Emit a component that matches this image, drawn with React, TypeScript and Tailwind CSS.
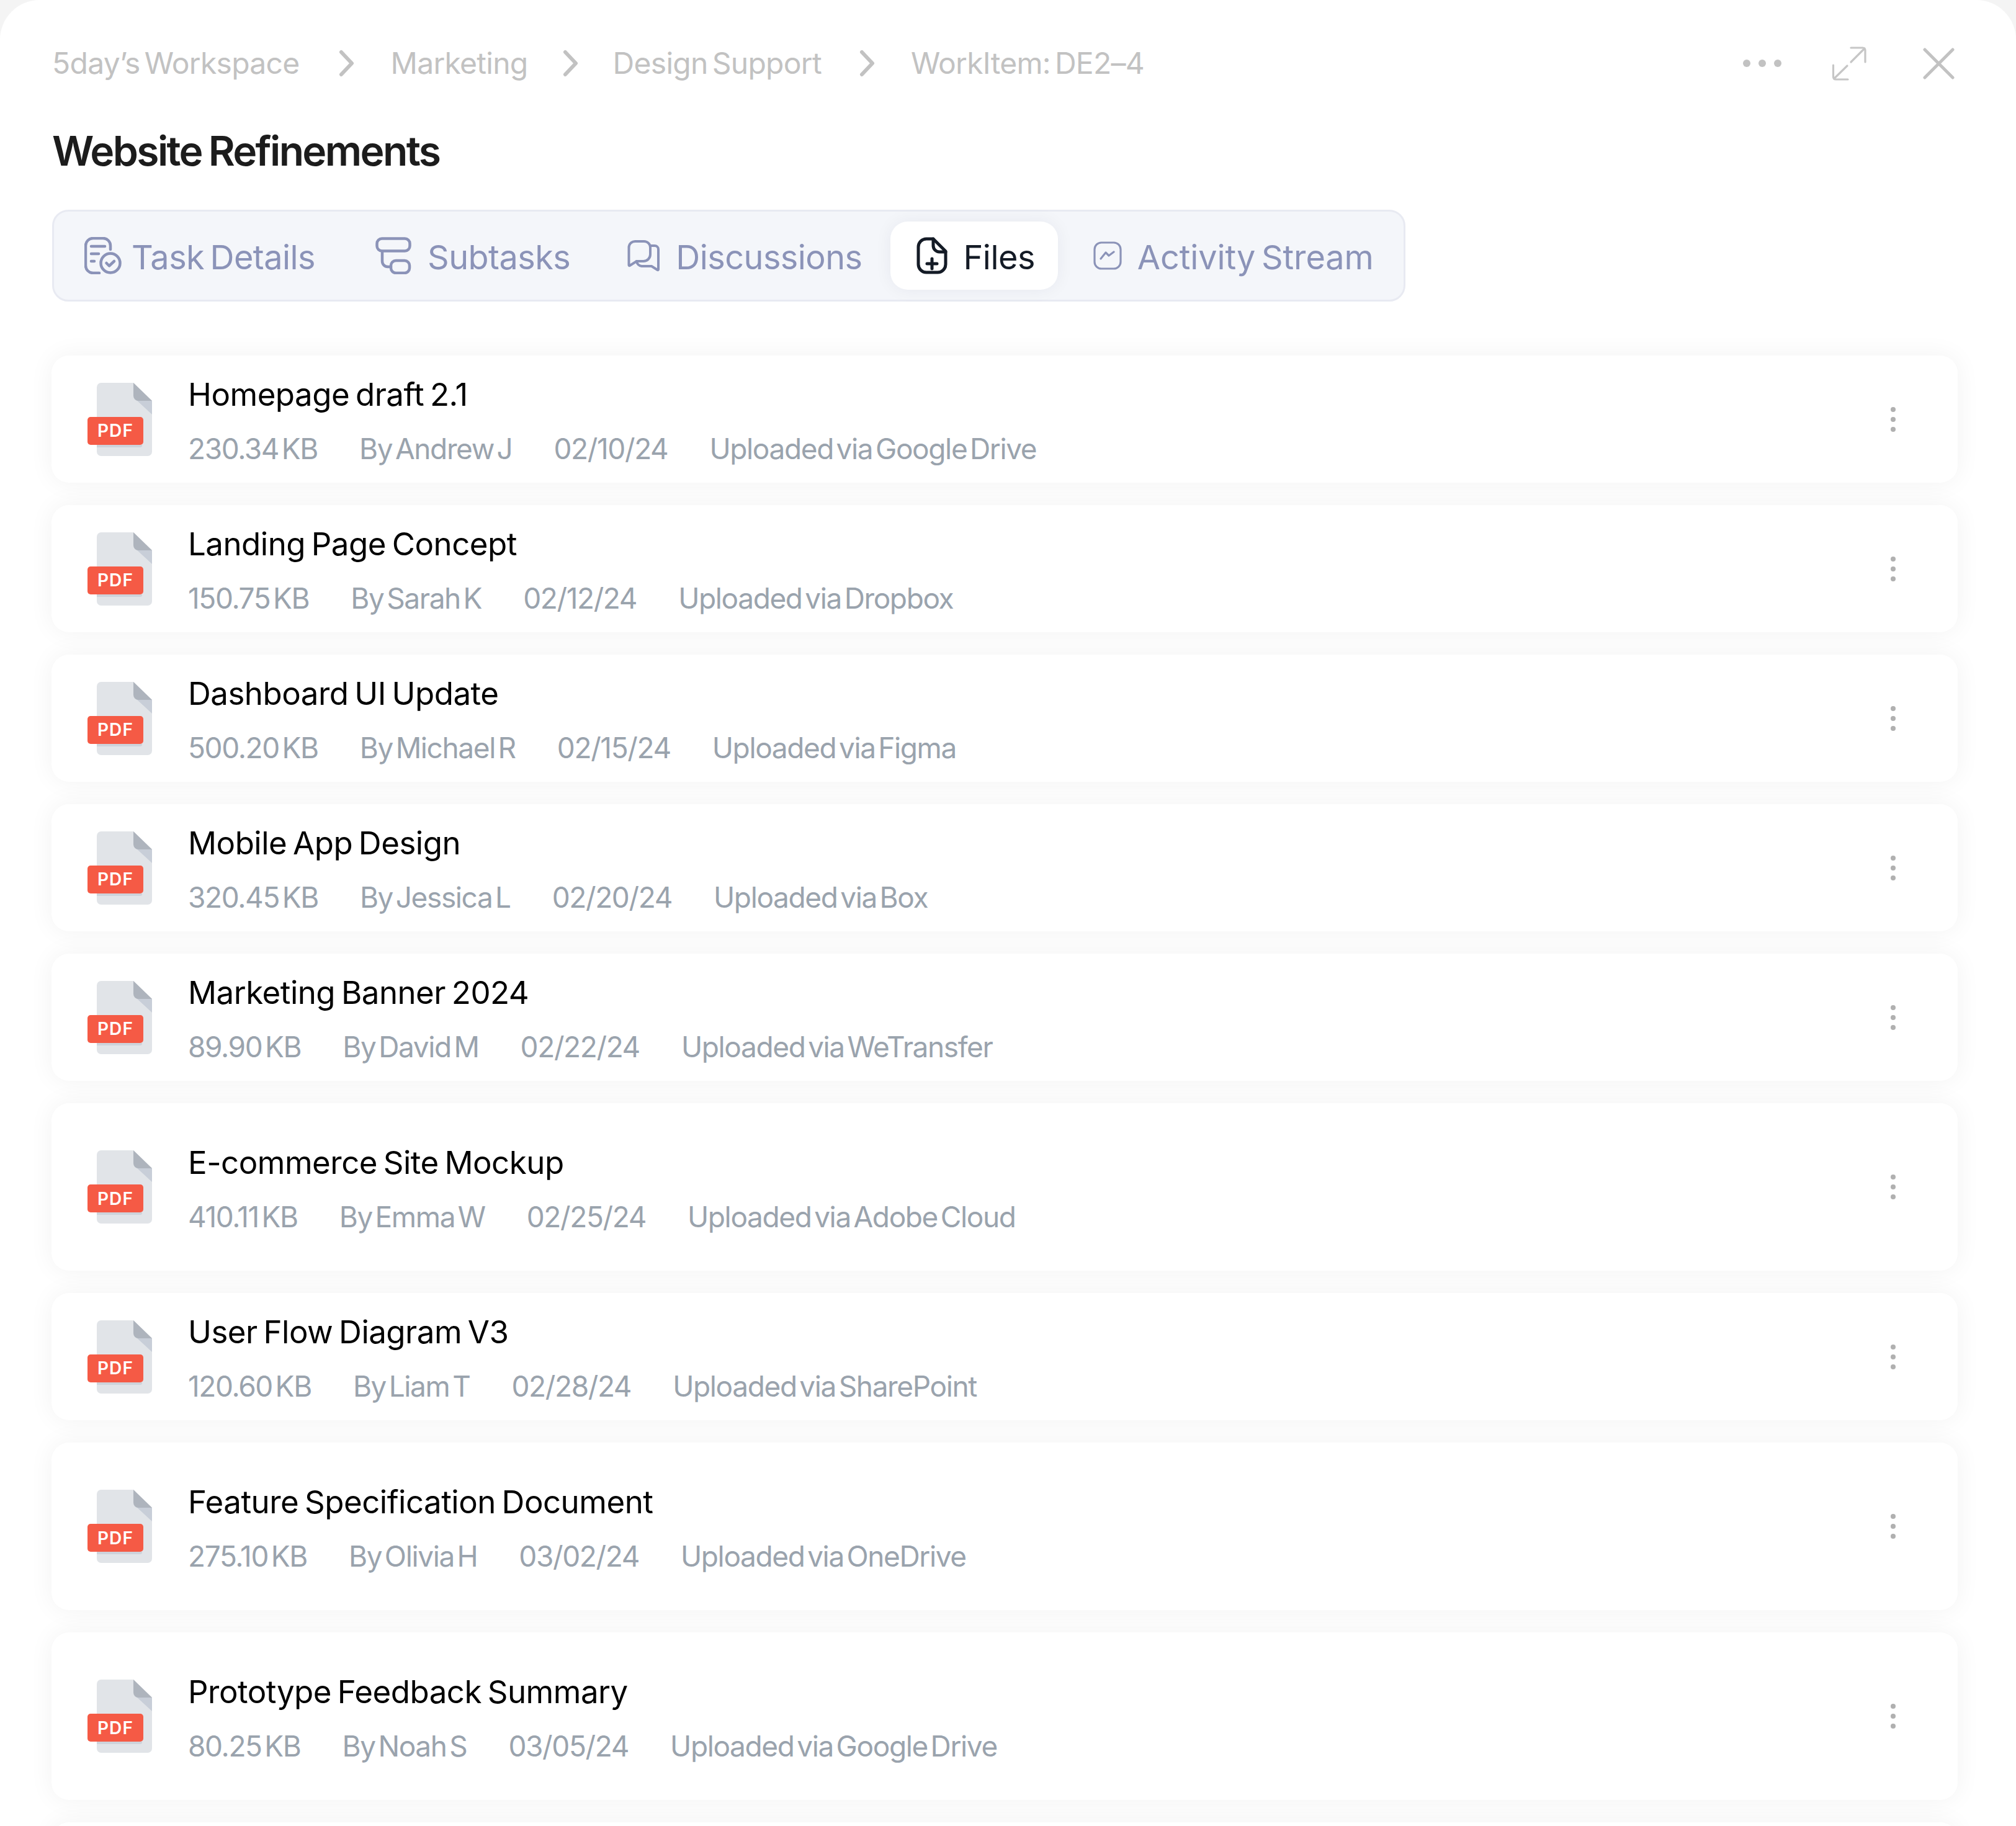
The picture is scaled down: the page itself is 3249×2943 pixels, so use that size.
import React from 'react';

const files = [
  { name: 'Homepage draft 2.1', size: '230.34 KB', by: 'By Andrew J', date: '02/10/24', via: 'Uploaded via Google Drive', tall: false },
  { name: 'Landing Page Concept', size: '150.75 KB', by: 'By Sarah K', date: '02/12/24', via: 'Uploaded via Dropbox', tall: false },
  { name: 'Dashboard UI Update', size: '500.20 KB', by: 'By Michael R', date: '02/15/24', via: 'Uploaded via Figma', tall: false },
  { name: 'Mobile App Design', size: '320.45 KB', by: 'By Jessica L', date: '02/20/24', via: 'Uploaded via Box', tall: false },
  { name: 'Marketing Banner 2024', size: '89.90 KB', by: 'By David M', date: '02/22/24', via: 'Uploaded via WeTransfer', tall: false },
  { name: 'E-commerce Site Mockup', size: '410.11 KB', by: 'By Emma W', date: '02/25/24', via: 'Uploaded via Adobe Cloud', tall: true },
  { name: 'User Flow Diagram V3', size: '120.60 KB', by: 'By Liam T', date: '02/28/24', via: 'Uploaded via SharePoint', tall: false },
  { name: 'Feature Specification Document', size: '275.10 KB', by: 'By Olivia H', date: '03/02/24', via: 'Uploaded via OneDrive', tall: true },
  { name: 'Prototype Feedback Summary', size: '80.25 KB', by: 'By Noah S', date: '03/05/24', via: 'Uploaded via Google Drive', tall: true },
];

const Chevron = () => (
  <svg width="26" height="44" viewBox="0 0 26 44" fill="none" stroke="#c2c2c2" strokeWidth="6" strokeLinecap="round" strokeLinejoin="round">
    <path d="M4 4 L21 22 L4 40" />
  </svg>
);

const TaskIcon = () => (
  <svg width="60" height="60" viewBox="0 0 60 60" fill="none" stroke="currentColor" strokeWidth="4.5" strokeLinecap="round" strokeLinejoin="round">
    <path d="M42 20 V14 a12 12 0 0 0 -12 -12 H14 a12 12 0 0 0 -12 12 V46 a12 12 0 0 0 12 12 H24" />
    <path d="M11 15 H33 M11 27 H23 M11 39 H16" />
    <circle cx="42" cy="42" r="15.5" />
    <path d="M35.5 42 L40 46.5 L48 39" />
  </svg>
);

const SubtaskIcon = () => (
  <svg width="58" height="60" viewBox="0 0 58 60" fill="none" stroke="currentColor" strokeWidth="4.5" strokeLinecap="round" strokeLinejoin="round">
    <rect x="2.5" y="2.5" width="53" height="20" rx="8" />
    <rect x="25" y="38" width="30" height="20" rx="8" />
    <path d="M11 23 V39 a9 9 0 0 0 9 9 H25" />
  </svg>
);

const DiscussionIcon = () => (
  <svg width="52" height="52" viewBox="0 0 52 52" fill="none" stroke="currentColor" strokeWidth="4" strokeLinecap="round" strokeLinejoin="round">
    <path d="M2.5 13 a10 10 0 0 1 10 -10 H27 a10 10 0 0 1 10 10 V24 a11 11 0 0 1 -11 11 H15 L4 42 a1 1 0 0 1 -1.5 -1 Z" />
    <path d="M38 10 H44 a6 6 0 0 1 6 6 V48 a1 1 0 0 1 -1.5 1 L39 43 H23 a9 9 0 0 1 -8 -8" />
  </svg>
);

const FileAddIcon = () => (
  <svg width="50" height="60" viewBox="0 0 50 60" fill="none" stroke="currentColor" strokeWidth="5" strokeLinecap="round" strokeLinejoin="round">
    <path d="M27 3 H16 a13 13 0 0 0 -13 13 V44 a13 13 0 0 0 13 13 H34 a13 13 0 0 0 13 -13 V23 Z" />
    <path d="M27 3 V14 a10 10 0 0 0 10 10 H47" />
    <path d="M17 43 H33 M25 35 V51" />
  </svg>
);

const ActivityIcon = () => (
  <svg width="46" height="46" viewBox="0 0 46 46" fill="none" stroke="currentColor" strokeWidth="3.2" strokeLinecap="round" strokeLinejoin="round">
    <rect x="2" y="2" width="42" height="42" rx="11" />
    <path d="M12 28 L20 18 L25 23 L33 17" />
  </svg>
);

const PdfIcon = () => (
  <div className="relative w-[104px] h-[118px] shrink-0">
    <svg width="104" height="118" viewBox="0 0 104 118" className="block">
      <path d="M22 0 H74 L104 29 V111 a7 7 0 0 1 -7 7 H22 a7 7 0 0 1 -7 -7 V7 a7 7 0 0 1 7 -7 Z" fill="#e1e4e8" />
      <path d="M78 27 L104 51 V29 Z" fill="#c8ced8" />
      <path d="M74 0 V21 a8 8 0 0 0 8 8 H104 Z" fill="#aeb4bd" />
      <path d="M15 100 H88 V101 a3 3 0 0 1 -3 3 H15 Z" fill="#cdd3db" />
    </svg>
    <div className="absolute left-0 top-[55px] w-[90px] h-[45px] rounded-[5px] bg-[#f55a45] flex items-center justify-center text-white text-[28px] font-semibold tracking-[0.04em]">
      PDF
    </div>
  </div>
);

const FileCard = ({ file }: { file: (typeof files)[number] }) => (
  <div className={`${file.tall ? 'h-[270px]' : 'h-[205px]'} shrink-0 flex items-center rounded-[28px] bg-white pl-[58px] pr-[100px] shadow-[0_0_40px_rgba(0,0,0,0.055)]`}>
    <PdfIcon />
    <div className="ml-[58px] flex-1 flex flex-col gap-[27px] pt-[8px]">
      <div className="h-[60px] leading-[60px] text-[51px] tracking-[-0.01em] [word-spacing:-0.08em] text-black">{file.name}</div>
      <div className="h-[60px] leading-[60px] flex gap-[67px] text-[46px] tracking-[-0.03em] [word-spacing:-0.15em] text-[#9aa3ad]">
        <span>{file.size}</span>
        <span>{file.by}</span>
        <span>{file.date}</span>
        <span>{file.via}</span>
      </div>
    </div>
    <div className="flex flex-col gap-[8px]">
      <div className="w-[8px] h-[8px] rounded-full bg-[#b0b0b0]" />
      <div className="w-[8px] h-[8px] rounded-full bg-[#b0b0b0]" />
      <div className="w-[8px] h-[8px] rounded-full bg-[#b0b0b0]" />
    </div>
  </div>
);

export default function App() {
  return (
    <div className="w-[3249px] h-[2943px] overflow-hidden bg-[#f4f4f4] font-['Inter',sans-serif]">
      <div className="h-full rounded-t-[64px] bg-white pl-[84px] pr-[95px] pt-[72px]">
        <div className="flex items-center justify-between h-[60px] pr-[4px]">
          <div className="flex items-center text-[48px] tracking-[-0.015em] [word-spacing:-0.12em] text-[#c2c2c2]">
            <span>5day’s Workspace</span>
            <span className="ml-[63px]"><Chevron /></span>
            <span className="ml-[58px]">Marketing</span>
            <span className="ml-[56px]"><Chevron /></span>
            <span className="ml-[55px]">Design Support</span>
            <span className="ml-[61px]"><Chevron /></span>
            <span className="ml-[57px]">WorkItem: DE2–4</span>
          </div>
          <div className="flex items-center">
            <div className="flex gap-[13px]">
              <div className="w-[12px] h-[12px] rounded-full bg-[#c2c2c2]" />
              <div className="w-[12px] h-[12px] rounded-full bg-[#c2c2c2]" />
              <div className="w-[12px] h-[12px] rounded-full bg-[#c2c2c2]" />
            </div>
            <svg className="ml-[81px]" width="56" height="55" viewBox="0 0 56 55" fill="none" stroke="#c6c6c6" strokeWidth="3.2" strokeLinecap="round" strokeLinejoin="round">
              <path d="M31 2 H50 a4 4 0 0 1 4 4 V25 M53 3 L31 25" />
              <path d="M2.5 30 V49 a4 4 0 0 0 4 4 H26 M3.5 52 L25 31" />
            </svg>
            <svg className="ml-[91px]" width="51" height="51" viewBox="0 0 51 51" fill="none" stroke="#c2c2c2" strokeWidth="5" strokeLinecap="round">
              <path d="M3 3 L48 48 M48 3 L3 48" />
            </svg>
          </div>
        </div>
        <div className="mt-[71px] h-[80px] leading-[80px] text-[66px] font-semibold tracking-[-0.04em] [word-spacing:-0.05em] text-[#1c1c1c]">Website Refinements</div>
        <div className="mt-[55px] w-[2181px] h-[148px] flex items-center rounded-[26px] border-[3px] border-[#e8eaf2] bg-[#f4f6fa] text-[54px] tracking-[-0.01em] [word-spacing:-0.1em] text-[#8b93b8]">
          <div className="ml-[49px] flex items-center gap-[16px]"><TaskIcon /><span className="pt-[4px]">Task Details</span></div>
          <div className="ml-[97px] flex items-center gap-[26px]"><SubtaskIcon /><span className="pt-[4px]">Subtasks</span></div>
          <div className="ml-[92px] flex items-center gap-[26px]"><DiscussionIcon /><span className="pt-[4px]">Discussions</span></div>
          <div className="ml-[45px] h-[110px] flex items-center gap-[26px] rounded-[28px] bg-white pl-[42px] pr-[37px] text-[#141b26] shadow-[0_0_28px_rgba(20,27,60,0.06)]"><FileAddIcon /><span className="pt-[4px]">Files</span></div>
          <div className="ml-[57px] flex items-center gap-[25px]"><ActivityIcon /><span className="pt-[4px] tracking-[-0.002em]">Activity Stream</span></div>
        </div>
        <div className="mt-[87px] -ml-px -mr-px flex flex-col gap-[36px]">
          {files.map((file) => (
            <FileCard key={file.name} file={file} />
          ))}
          <div className="h-[205px] shrink-0 rounded-[28px] bg-white shadow-[0_0_40px_rgba(0,0,0,0.055)]" />
        </div>
      </div>
    </div>
  );
}
